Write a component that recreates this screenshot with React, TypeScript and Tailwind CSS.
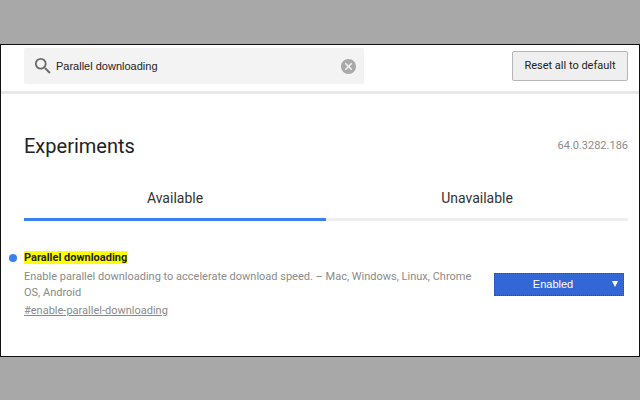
import { useState } from 'react'

const tabs = ['Available', 'Unavailable']

function SearchIcon() {
  return (
    <svg viewBox="2 2 20 20" className="size-[18px] shrink-0 fill-[#6b6b6b]" aria-hidden="true">
      <path d="M15.5 14h-.79l-.28-.27A6.471 6.471 0 0 0 16 9.5 6.5 6.5 0 1 0 9.5 16c1.61 0 3.09-.59 4.23-1.57l.27.28v.79l5 4.99L20.49 19l-4.99-5zm-6 0C7.01 14 5 11.99 5 9.5S7.01 5 9.5 5 14 7.01 14 9.5 11.99 14 9.5 14z" />
    </svg>
  )
}

function ClearIcon() {
  return (
    <svg viewBox="2 2 20 20" className="size-[15px] fill-[#a9a9a9]" aria-hidden="true">
      <path d="M12 2C6.47 2 2 6.47 2 12s4.47 10 10 10 10-4.47 10-10S17.53 2 12 2zm5 13.59L15.59 17 12 13.41 8.41 17 7 15.59 10.59 12 7 8.41 8.41 7 12 10.59 15.59 7 17 8.41 13.41 12 17 15.59z" />
    </svg>
  )
}

function Header() {
  const [query, setQuery] = useState('Parallel downloading')

  return (
    <header className="flex items-center justify-between border-b-3 border-[#e9e9e9] pt-[3px] pr-[11px] pb-[7px] pl-[23px]">
      <div className="flex h-9 w-[340px] items-center gap-1 rounded-xs bg-[#f3f3f3] pr-2 pl-2.5">
        <SearchIcon />
        <input
          type="text"
          aria-label="Search flags"
          value={query}
          onChange={(e) => setQuery(e.target.value)}
          className="min-w-0 flex-1 bg-transparent font-['Liberation_Sans',Arial,sans-serif] text-[11px] text-[#222] outline-none"
        />
        <button type="button" aria-label="Clear search" onClick={() => setQuery('')}>
          <ClearIcon />
        </button>
      </div>
      <button
        type="button"
        className="h-[30px] w-[116px] rounded-xs border border-[#b5b5b5] bg-[#efefef] text-[11px] text-[#222]"
      >
        Reset all to default
      </button>
    </header>
  )
}

function Experiment() {
  return (
    <section className="flex items-center justify-between pr-1">
      <div className="relative w-[462px] text-[11px] leading-4 text-[#8a8a8a]">
        <span className="absolute top-1 -left-[15px] size-2 rounded-full bg-[#3b7ff0]" />
        <h2 className="mb-[3px] font-bold text-[#222]">
          <mark className="bg-[#ffff00] text-inherit">Parallel downloading</mark>
        </h2>
        <p className="mb-0.5">
          Enable parallel downloading to accelerate download speed. – Mac, Windows, Linux, Chrome OS, Android
        </p>
        <a href="#enable-parallel-downloading" className="underline">
          #enable-parallel-downloading
        </a>
      </div>
      <div className="relative">
        <select
          aria-label="Parallel downloading"
          defaultValue="Enabled"
          className="block h-[23px] w-[130px] appearance-none border border-dotted border-[#1a50d0] bg-[#3367d6] pr-3 text-center font-['Liberation_Sans',Arial,sans-serif] text-[11px] text-white"
        >
          <option>Default</option>
          <option>Enabled</option>
          <option>Disabled</option>
        </select>
        <svg viewBox="0 0 6 6" className="pointer-events-none absolute top-2 right-1.5 size-1.5 fill-white" aria-hidden="true">
          <path d="M0 0h6L3 6z" />
        </svg>
      </div>
    </section>
  )
}

function App() {
  const [active, setActive] = useState('Available')

  return (
    <div className="min-h-screen bg-[#a8a8a8] py-11 font-[Roboto,'Liberation_Sans',sans-serif]">
      <div className="border border-[#111] bg-white">
        <Header />
        <main className="pt-[38px] pr-[11px] pb-[37px] pl-[23px]">
          <div className="flex items-center justify-between">
            <h1 className="text-[20px] leading-7 text-[#222]">Experiments</h1>
            <span className="text-[11px] text-[#8a8a8a]">64.0.3282.186</span>
          </div>
          <div role="tablist" className="mt-4 mb-[29px] flex">
            {tabs.map((tab) => (
              <button
                key={tab}
                type="button"
                role="tab"
                aria-selected={tab === active}
                onClick={() => setActive(tab)}
                className={
                  tab === active
                    ? 'h-[45px] flex-1 border-b-3 border-[#3b7ff0] pt-0.5 text-[14px] text-[#333]'
                    : 'h-[45px] flex-1 border-b-3 border-[#efefef] pt-0.5 text-[14px] text-[#333]'
                }
              >
                {tab}
              </button>
            ))}
          </div>
          <Experiment />
        </main>
      </div>
    </div>
  )
}

export default App
